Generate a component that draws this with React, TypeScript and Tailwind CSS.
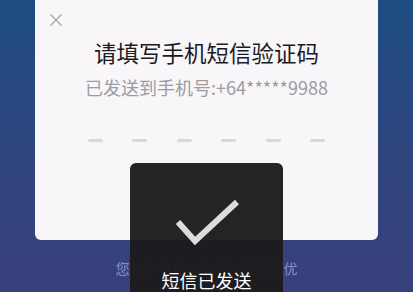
export default function App() {
  const font = { fontFamily: '"Noto Sans CJK SC", "Noto Sans", sans-serif' }
  return (
    <div
      className="relative w-[413px] h-[292px] overflow-hidden bg-gradient-to-b from-[#1c4c81] to-[#39407c] flex flex-col"
      style={font}
    >
      {/* Verification card */}
      <div className="mx-[35px] -mt-[6px] rounded-[6px] bg-[#f8f6f9] pt-[20px] pb-[98px] flex flex-col">
        <button className="ml-[15px] w-[12px] h-[12px] text-[#a9a7ab]">
          <svg viewBox="0 0 12 12" className="w-[12px] h-[12px]" fill="none" stroke="currentColor" strokeWidth="1.3">
            <path d="M0.5 0.5 L11.5 11.5 M11.5 0.5 L0.5 11.5" />
          </svg>
        </button>
        <h1 className="mt-[11px] text-center text-[22.5px] leading-[30px] text-[#1b1b1d]">
          请填写手机短信验证码
        </h1>
        <p className="mt-[8px] text-center text-[18px] leading-[24px] text-[#9d9b9f]">
          已发送到手机号:+64*****9988
        </p>
        <div className="mt-[40px] flex justify-center gap-[29.5px]">
          {[0, 1, 2, 3, 4, 5].map((i) => (
            <span key={i} className="w-[15px] h-[3px] rounded-full bg-[#d9d7db]" />
          ))}
        </div>
      </div>

      <p className="mt-[18px] text-center text-[14px] leading-[20px] text-[#8b8fbf]">
        您的手机号仅用于登录享受优
      </p>

      {/* Toast */}
      <div className="absolute left-[130px] top-[163px] w-[153px] h-[160px] rounded-[6px] bg-[#1b1b1d]/[0.96] flex flex-col items-center">
        <svg width="64" height="48" viewBox="0 0 64 48" className="mt-[36px]" fill="none">
          <polyline
            points="3,23 20,42 62,3"
            stroke="#dcdbde"
            strokeWidth="6"
            strokeLinejoin="miter"
          />
        </svg>
        <span className="mt-[20px] text-[18px] leading-[26px] text-white">短信已发送</span>
      </div>
    </div>
  )
}
